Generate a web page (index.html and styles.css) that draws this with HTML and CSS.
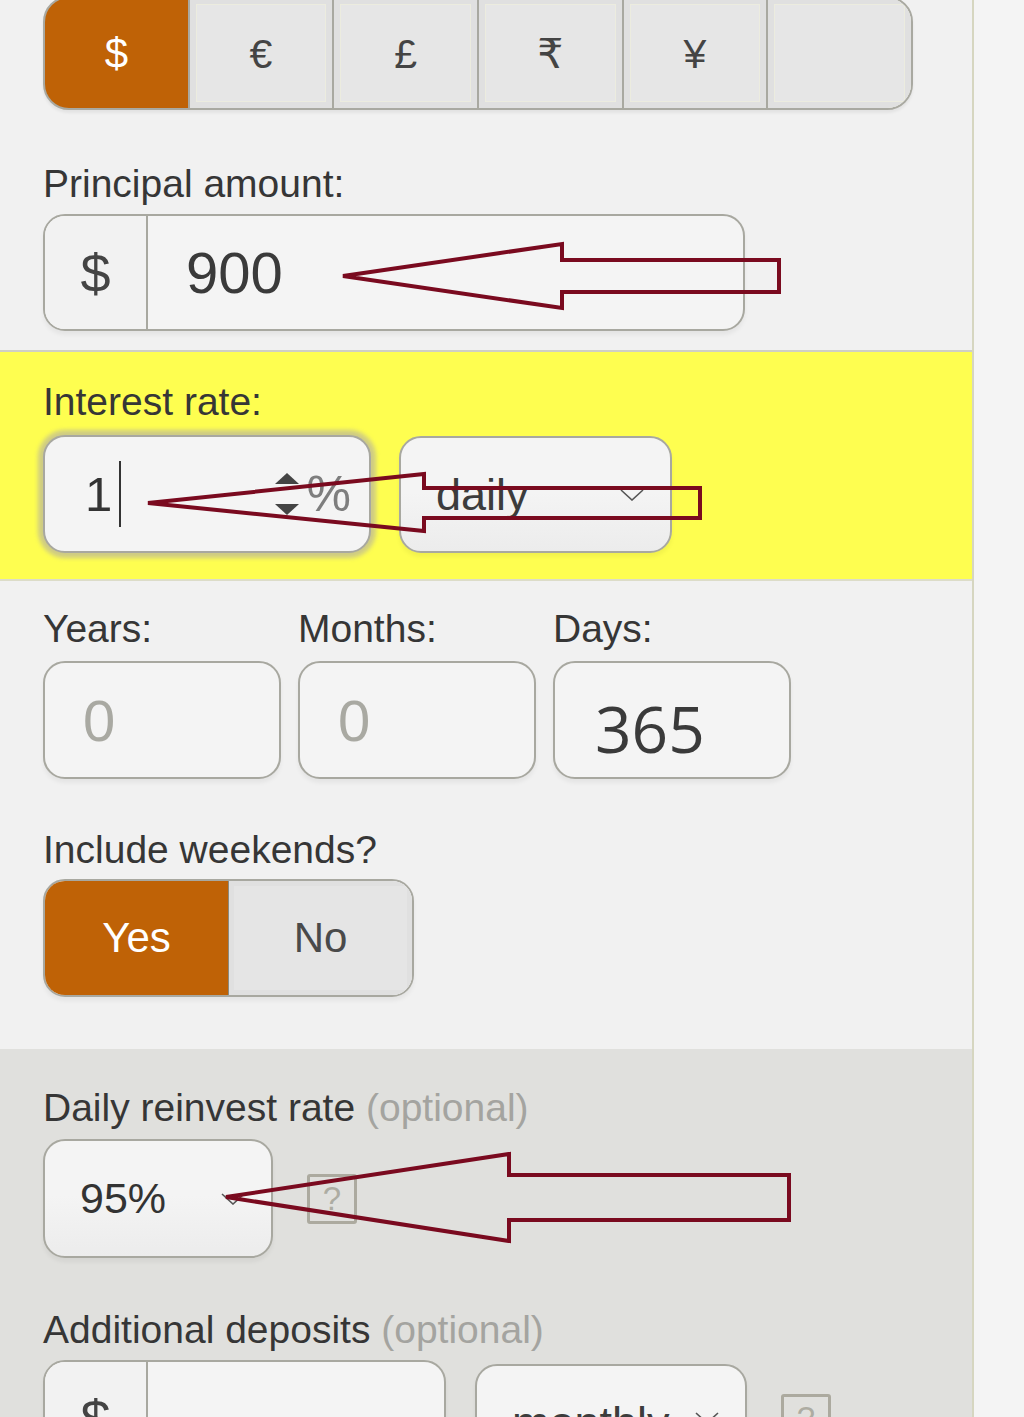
FILE: index.html
```html
<!DOCTYPE html>
<html lang="en">
<head>
<meta charset="utf-8">
<title>Daily compound interest calculator</title>
<link rel="stylesheet" href="styles.css">
</head>
<body>
<div class="panel">
  <section class="sec sec-top">
    <div class="seg">
      <div class="seg-btn active">$</div>
      <div class="seg-btn">€</div>
      <div class="seg-btn">£</div>
      <div class="seg-btn">₹</div>
      <div class="seg-btn">¥</div>
      <div class="seg-btn"></div>
    </div>
    <div class="label lbl-principal">Principal amount:</div>
    <div class="field field-principal">
      <div class="addon">$</div>
      <div class="value">900</div>
    </div>
  </section>

  <section class="sec sec-yellow">
    <div class="label">Interest rate:</div>
    <div class="row row-rate">
      <div class="field field-rate">
        <span class="rate-val">1</span><span class="caret"></span>
        <span class="grow"></span>
        <svg class="spin" width="24" height="42" viewBox="0 0 24 42"><polygon points="0,11 12,0 24,11" /><polygon points="0,31 24,31 12,42" /></svg>
        <span class="pct">%</span>
      </div>
      <div class="field select select-daily">
        <span class="sel-text">daily</span>
        <svg class="chev" width="24" height="12" viewBox="0 0 24 12"><polyline points="1,1 12,11 23,1" /></svg>
      </div>
    </div>
  </section>

  <section class="sec sec-mid">
    <div class="dur">
      <div class="dur-col">
        <div class="label">Years:</div>
        <div class="field field-dur"><span class="ph">0</span></div>
      </div>
      <div class="dur-col">
        <div class="label">Months:</div>
        <div class="field field-dur"><span class="ph">0</span></div>
      </div>
      <div class="dur-col">
        <div class="label">Days:</div>
        <div class="field field-dur field-days"><span class="days">365</span></div>
      </div>
    </div>
    <div class="label lbl-weekends">Include weekends?</div>
    <div class="toggle">
      <div class="tog-btn tog-on">Yes</div>
      <div class="tog-btn tog-off">No</div>
    </div>
  </section>

  <section class="sec sec-opt">
    <div class="label">Daily reinvest rate <span class="opt">(optional)</span></div>
    <div class="row row-reinvest">
      <div class="field select select-reinvest">
        <span class="sel-text sel-95">95%</span>
        <svg class="chev" width="24" height="12" viewBox="0 0 24 12"><polyline points="1,1 12,11 23,1" /></svg>
      </div>
      <div class="help">?</div>
    </div>
    <div class="label lbl-deposits">Additional deposits <span class="opt">(optional)</span></div>
    <div class="row row-deposits">
      <div class="field field-deposit">
        <div class="addon">$</div>
        <div class="value"></div>
      </div>
      <div class="field select select-monthly">
        <span class="sel-text">monthly</span>
        <svg class="chev chev-up" width="24" height="12" viewBox="0 0 24 12"><polyline points="1,1 12,11 23,1" /></svg>
      </div>
      <div class="help help-dep">?</div>
    </div>
  </section>
</div>

<svg class="arrows" width="1024" height="1417" viewBox="0 0 1024 1417">
  <polygon points="343,276 562,244 562,260 779,260 779,292 562,292 562,308" />
  <polygon points="148,503 424,474 424,488 700,488 700,518 424,518 424,531" />
  <polygon points="226,1197 509,1154 509,1175 789,1175 789,1220 509,1220 509,1241" />
</svg>
</body>
</html>
```

FILE: styles.css
```css
html, body {
  margin: 0;
  padding: 0;
}
body {
  background: #f4f4f4;
  font-family: "Liberation Sans", Arial, "DejaVu Sans", sans-serif;
  color: #383838;
  position: relative;
  height: 1417px;
  overflow: hidden;
}
.panel {
  width: 972px;
  height: 1417px;
  overflow: hidden;
  background: #f1f1f1;
  border-right: 2px solid #d6d6c0;
}
.sec {
  display: flex;
  flex-direction: column;
  align-items: flex-start;
  padding-left: 43px;
}
.sec-top {
  padding-bottom: 19px;
}
.seg {
  margin-top: -4px;
  width: 870px;
  height: 114px;
  box-sizing: border-box;
  border: 2px solid #a9a9a1;
  border-radius: 26px;
  overflow: hidden;
  display: flex;
  background: #a9a9a1;
  gap: 2px;
  box-shadow: 0 3px 3px rgba(0,0,0,0.06);
}
.seg-btn {
  flex: 1;
  display: flex;
  align-items: center;
  justify-content: center;
  background: #e6e6e6;
  box-shadow: inset 0 0 0 6px #e0e0e0, inset 0 0 0 7px #ececdf;
  font-family: "Liberation Sans", "DejaVu Sans", sans-serif;
  font-size: 41px;
  color: #444;
  padding-top: 2px;
}
.seg-btn.active {
  background: #bf6206;
  box-shadow: none;
  color: #fff;
  font-size: 42px;
}
.label {
  font-size: 39px;
  line-height: 44px;
  color: #363636;
  white-space: nowrap;
}
.opt {
  color: #a4a4a0;
}
.lbl-principal {
  margin-top: 52px;
}
.field {
  box-sizing: border-box;
  height: 118px;
  border: 2px solid #a8a8a0;
  border-radius: 22px;
  background: #f4f4f4;
  display: flex;
  align-items: center;
  box-shadow: 0 4px 4px rgba(0,0,0,0.05);
}
.field-principal {
  margin-top: 8px;
  width: 702px;
  height: 117px;
  overflow: hidden;
}
.addon {
  width: 101px;
  height: 100%;
  border-right: 2px solid #a8a8a0;
  display: flex;
  align-items: center;
  justify-content: center;
  font-size: 54px;
  color: #444;
  background: #f2f2f2;
}
.value {
  padding-left: 38px;
  font-size: 58px;
  color: #3a3a3a;
}

.sec-yellow {
  background: #fefe50;
  border-top: 2px solid #cfcfc4;
  border-bottom: 2px solid #dcdcc8;
  padding-top: 27.5px;
  padding-bottom: 26px;
}
.row {
  display: flex;
  align-items: center;
}
.row-rate {
  margin-top: 10.5px;
  gap: 28px;
}
.field-rate {
  width: 328px;
  padding-left: 40px;
  padding-right: 18px;
  box-shadow: 0 0 4px 5px rgba(190, 186, 150, 0.75);
}
.rate-val {
  font-size: 49px;
  color: #333;
}
.caret {
  width: 2px;
  height: 66px;
  background: #333;
  margin-left: 7px;
}
.grow {
  flex: 1;
}
.spin {
  fill: #444;
  margin-right: 8px;
}
.pct {
  font-size: 50px;
  color: #7e7e7e;
}
.select {
  padding-left: 35px;
  padding-right: 26px;
  justify-content: space-between;
  background: linear-gradient(#f4f4f4 0%, #f4f4f4 48%, #ececec 100%);
}
.select-daily {
  width: 273px;
  height: 117px;
  margin-top: 2px;
}
.sel-text {
  font-size: 45px;
  color: #3c3c3c;
}
.chev {
  fill: none;
  stroke: #555;
  stroke-width: 1.6;
}
.chev-up {
  margin-top: -10px;
}

.sec-mid {
  padding-top: 26px;
  padding-bottom: 52px;
}
.dur {
  display: grid;
  grid-template-columns: 238px 238px 238px;
  column-gap: 17px;
}
.dur-col {
  display: flex;
  flex-direction: column;
}
.field-dur {
  margin-top: 10px;
  padding-left: 38px;
}
.ph {
  font-size: 58px;
  color: #a9a9a2;
}
.field-days {
  padding-top: 16px;
  padding-left: 40px;
}
.days {
  font-family: "Open Sans", "DejaVu Sans", sans-serif;
  font-size: 64px;
  color: #3a3a3a;
}
.lbl-weekends {
  margin-top: 48.5px;
}
.toggle {
  margin-top: 7.5px;
  width: 371px;
  height: 118px;
  box-sizing: border-box;
  border: 2px solid #a8a8a0;
  border-radius: 22px;
  overflow: hidden;
  display: flex;
  box-shadow: 0 4px 4px rgba(0,0,0,0.05);
}
.tog-btn {
  display: flex;
  align-items: center;
  justify-content: center;
  font-size: 42px;
}
.tog-on {
  width: 183px;
  background: #bf6206;
  color: #fff;
}
.tog-off {
  flex: 1;
  background: #e5e5e5;
  color: #4a4a4a;
  border-left: 1px solid #8a8a80;
  box-shadow: inset 0 0 0 5px #e0e0e0;
}

.sec-opt {
  background: #e0e0dd;
  padding-top: 36.5px;
}
.row-reinvest {
  margin-top: 9.5px;
  gap: 34px;
}
.select-reinvest {
  width: 230px;
  height: 119px;
}
.sel-95 {
  font-size: 43px;
  color: #333;
}
.help {
  box-sizing: border-box;
  width: 50px;
  height: 50px;
  border: 3px solid #acaa9f;
  border-radius: 3px;
  display: flex;
  align-items: center;
  justify-content: center;
  font-size: 33px;
  color: #adaca2;
}
.lbl-deposits {
  margin-top: 50px;
}
.row-deposits {
  margin-top: 8px;
  align-items: flex-start;
}
.field-deposit {
  width: 403px;
  overflow: hidden;
}
.select-monthly {
  width: 272px;
  margin-left: 29px;
  margin-top: 4px;
}
.help-dep {
  margin-left: 34px;
  margin-top: 34px;
}

.arrows {
  position: absolute;
  left: 0;
  top: 0;
  pointer-events: none;
}
.arrows polygon {
  fill: none;
  stroke: #7a0a1f;
  stroke-width: 4;
  stroke-linejoin: miter;
}
```
